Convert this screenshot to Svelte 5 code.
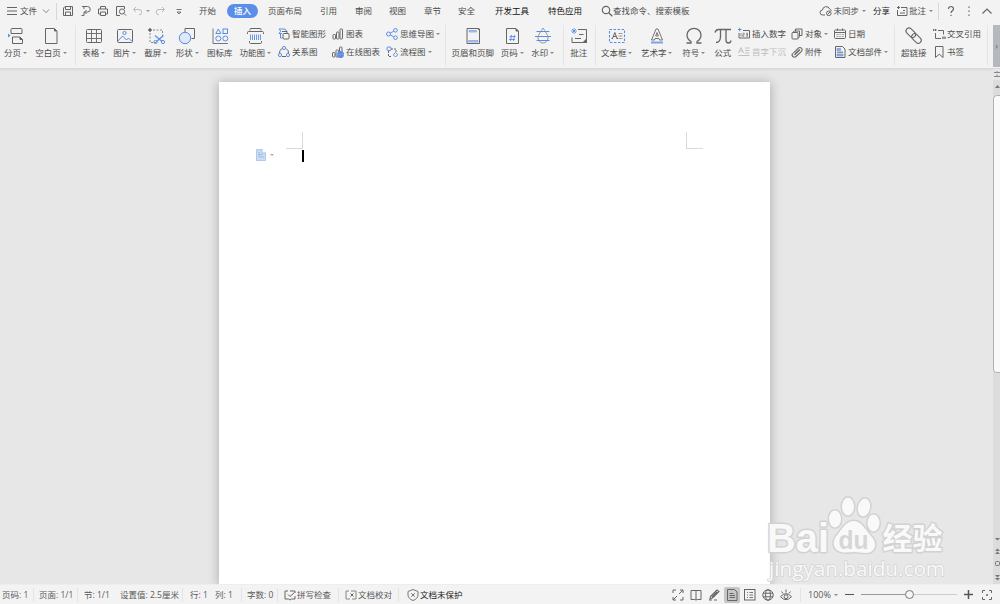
<script>
  // Cells are laid out in order; w is the width of each cell in pixels.
  const quick = [
    { icon: 'menu', w: 15 }, { text: '文件', w: 19 }, { icon: 'down', w: 14 }, { sep: true, w: 5 },
    { icon: 'save', w: 17 }, { icon: 'export', w: 17 }, { icon: 'print', w: 17 }, { icon: 'preview', w: 17 },
    { icon: 'undo', w: 14 }, { caret: true, w: 7, dim: true }, { icon: 'redo', w: 18 }, { icon: 'more', w: 20 }
  ];
  const tabs = [
    { text: '开始', w: 37 }, { text: '插入', w: 32, on: true }, { text: '页面布局', w: 52 }, { text: '引用', w: 35 },
    { text: '审阅', w: 34 }, { text: '视图', w: 35 }, { text: '章节', w: 34 }, { text: '安全', w: 37 },
    { text: '开发工具', w: 53, strong: true }, { text: '特色应用', w: 53, strong: true }
  ];
  const ribbon = [
    { w: 31, icon: 'break', text: '分页', caret: true },
    { w: 40, icon: 'blank', text: '空白页', caret: true },
    { sep: true, w: 8 },
    { w: 31, icon: 'table', text: '表格', caret: true },
    { w: 31, icon: 'picture', text: '图片', caret: true },
    { w: 31, icon: 'crop', text: '截屏', caret: true },
    { w: 32, icon: 'shapes', text: '形状', caret: true },
    { w: 33, icon: 'library', text: '图标库' },
    { w: 38, icon: 'barcode', text: '功能图', caret: true },
    { w: 54, shift: 2, rows: [{ icon: 'smart', text: '智能图形' }, { icon: 'relation', text: '关系图' }] },
    { w: 54, rows: [{ icon: 'chart', text: '图表' }, { icon: 'online', text: '在线图表' }] },
    { w: 56, rows: [{ icon: 'mind', text: '思维导图', caret: true }, { icon: 'flow', text: '流程图', caret: true }] },
    { sep: true, w: 8 },
    { w: 49, icon: 'header', text: '页眉和页脚' },
    { w: 30, icon: 'pagenum', text: '页码', caret: true },
    { w: 31, icon: 'water', text: '水印', caret: true },
    { sep: true, w: 9 },
    { w: 23, icon: 'note', text: '批注' },
    { sep: true, w: 8 },
    { w: 37, icon: 'textbox', text: '文本框', caret: true },
    { w: 43, icon: 'wordart', text: '艺术字', caret: true },
    { w: 31, icon: 'omega', text: '符号', caret: true },
    { w: 27, icon: 'pi', text: '公式' },
    { w: 53, rows: [{ icon: 'number', text: '插入数字' }, { icon: 'dropcap', text: '首字下沉', dim: true }] },
    { w: 43, rows: [{ icon: 'object', text: '对象', caret: true }, { icon: 'clip', text: '附件' }] },
    { w: 57, rows: [{ icon: 'date', text: '日期' }, { icon: 'parts', text: '文档部件', caret: true }] },
    { sep: true, w: 8 },
    { w: 33, icon: 'link', text: '超链接' },
    { w: 52, shift: 1, rows: [{ icon: 'cross', text: '交叉引用' }, { icon: 'bookmark', text: '书签' }] },
    { sep: true, w: 6 }
  ];
  const status = [
    { text: '页码: 1', w: 31 }, { sep: true, w: 6 }, { text: '页面: 1/1', w: 38 }, { sep: true, w: 7 },
    { text: '节: 1/1', w: 36 }, { text: '设置值: 2.5厘米', w: 62 }, { sep: true, w: 8 },
    { text: '行: 1', w: 25 }, { text: '列: 1', w: 26 }, { sep: true, w: 6 }, { text: '字数: 0', w: 30 }, { sep: true, w: 7 },
    { icon: 'spell', text: '拼写检查', w: 54 }, { sep: true, w: 7 }, { icon: 'proof', text: '文档校对', w: 53 },
    { sep: true, w: 9 }, { icon: 'shield', text: '文档未保护', w: 70, strong: true }
  ];
  const views = ['expand', 'book', 'pen', 'pageview', 'outline', 'globe', 'eye'];

  const B = 'stroke="#5b8de6"';
  const art = {
    menu: '<path d="M2 3.500h10M2 7h10M2 10.500h10"/>',
    down: '<path d="M4 5.500l3 3.200 3-3.200" stroke="#888"/>',
    save: '<path d="M2.500 4l1.500-1.500h7.500v9h-9zM4.500 2.500v3h5v-3M4.500 11.500v-3.500h5v3.500"/>',
    export: '<path d="M3 2.500h5.500a2.700 2.700 0 010 5.500H5.500M5 2.500v2.500M7.500 6L5.500 8l2 2M2.500 11.500h2.500V8"/>',
    print: '<path d="M4.500 5V2.500h5V5M4 10H2.500V5h9v5H10M4.500 8h5v3.500h-5z"/>',
    preview: '<path d="M6 11.500H2.500v-9h8V5"/><circle cx="8" cy="7.500" r="2.600"/><path d="M10 9.500l2 2"/>',
    undo: '<path d="M5 3L2.500 5.500 5 8M2.500 5.500h5.500a2.700 2.700 0 010 5.400" stroke="#bbb"/>',
    redo: '<path d="M9 3l2.500 2.500L9 8M11.500 5.500H6a2.700 2.700 0 000 5.400" stroke="#bbb"/>',
    more: '<path d="M4.500 5.500h5M5 8h4L7 10z" stroke-width=".9"/>',
    search: '<circle cx="6" cy="6" r="3.700" stroke-width="1.200"/><path d="M8.800 8.800l3.500 3.500" stroke-width="1.300"/>',
    cloud: '<path d="M6 11H3.700a2.500 2.500 0 01-.3-5A3.800 3.800 0 0110.700 5a2.500 2.500 0 011.600 2"/><circle cx="9.800" cy="9.300" r="2.300"/><path d="M8.500 10.500l2.500-2.500"/>',
    comment: '<path d="M6 3.500h6v8H2.500V6M2 3.500h3M3.500 2v3M5 9h5M8 6.500h2"/>',
    help: '<path d="M4.500 5a2.500 2.500 0 115 0c0 1.800-2.500 1.800-2.500 4M7 10.800v1.200" stroke-width="1.200"/>',
    dots: '<path d="M7 2.500v1.200M7 6.500v1.200M7 10.500v1.200" stroke-width="1.400"/>',
    up: '<path d="M2.500 9.500L7 5l4.500 4.500" stroke-width="1.200"/>',
    smart: `<path d="M2 2h6l2 2.500M2 2l1.800 2.200L2 6.500h3M3.500 7v4h2" ${B}/><rect x="6" y="6.500" width="6" height="5.500" rx="1"/><path d="M10 6.500v-2H5"/>`,
    relation: `<path d="M5 3.500a5 5 0 00-2.500 5M9 3.500a5 5 0 012.500 5M5 11.500h4"/><g ${B}><circle cx="7" cy="3" r="1.600"/><circle cx="3" cy="10" r="1.600"/><circle cx="11" cy="10" r="1.600"/></g>`,
    chart: '<rect x="2" y="7.500" width="2.500" height="4.500" rx=".7"/><rect x="5.500" y="5" width="2.500" height="7" rx=".7"/><rect x="9" y="2" width="2.500" height="10" rx=".7"/>',
    online: `<rect x="1.500" y="7.500" width="2.500" height="4.500" rx=".7"/><rect x="5" y="5" width="2.500" height="7" rx=".7"/><rect x="8.500" y="2" width="2.500" height="10" rx=".7"/><circle cx="9.500" cy="9.500" r="3.500" fill="#5b8de6" stroke="none"/><path d="M6 9.500h7" stroke="#8fb2f0" stroke-width=".5"/>`,
    mind: `<g ${B}><circle cx="3.500" cy="7" r="2"/><circle cx="10.500" cy="3.300" r="1.800"/><circle cx="10.500" cy="10.700" r="1.800"/></g><path d="M5.300 6l3.500-1.800M5.300 8l3.500 1.800" ${B}/>`,
    flow: `<rect x="2" y="2" width="4" height="3.500" rx="1" ${B}/><path d="M6 4h5v3M3.500 6v5.500H7" stroke-dasharray="2 1"/><path d="M10.500 7.500l2.300 2.200-2.300 2.300L8.200 9.700z" ${B}/>`,
    number: `<path d="M6 3.500h6.500v7.500H2V6"/><path d="M1 2.500h3.500M2.700 .8v3.500" ${B}/><path d="M4 6v3.500M5.700 6.200h1.500v1.500H5.700v1.600h1.500M9 6.200h1.500v3.100H9M9 7.700h1.500" stroke-width=".7"/>`,
    dropcap: '<g stroke="#b8b8b8"><path d="M1.500 8L4 2.500 6.500 8M2.500 6h3M8 3h4.500M8 5.500h4.500M8 8h4.500M1.500 10.500h11"/></g>',
    object: '<path d="M5.500 4.500V2h6.500v6.500H9.500"/><rect x="2" y="5.500" width="6" height="6.500" rx=".8"/><path d="M2.500 5.500L4.500 4h5v5.500L8 11.500"/>',
    clip: '<path d="M4.500 10L10 4.500M3.300 8.200l5-5a2.200 2.200 0 013.200 3.100L6 11.500a2.200 2.200 0 01-3.200-3.200M5 9l4-4" stroke-width="1.100"/>',
    date: '<rect x="1.500" y="3" width="11" height="8.500" rx="1"/><path d="M1.500 5.500h11M4.500 1.500v2M9.500 1.500v2"/><path d="M3.500 7.500h2M6.300 7.500h1.500M8.800 7.500h2M3.500 9.500h2M6.300 9.500h1.500M8.800 9.500h2" stroke-width=".8" stroke="#888"/>',
    parts: '<path d="M2.500 1.500h7l2.500 2.500v8.500h-9.500z"/><path d="M4 3.500h3.500v2H4zM4 9h6v2H4z" fill="#8fb2f0" stroke="#5b8de6" stroke-width=".6"/><path d="M4 7.200h6"/>',
    cross: '<path d="M6 3.500h5.500v4M9 11.500H3.500V6"/><path d="M1.700 2v2M3.700 2v2M11 9.500v2.500M13 9.500v2.500" stroke-width="1.300"/>',
    bookmark: '<path d="M3.500 1.500h7.500v11L7.200 9.200 3.500 12.500z"/>',
    spell: '<path d="M5 3H2v8h3.500l1.500 1 1.500-1H12V8M7 3h5v2M5 6.500l2 2 4.500-4"/>',
    proof: '<path d="M5 3H2v8h4M7 3h5v8H8" stroke="#888"/><path d="M6.500 5.500l3 3M9.500 5.500l-3 3"/>',
    shield: '<path d="M7 1.500l5 2v3.500c0 2.500-2 4.500-5 5.500-3-1-5-3-5-5.500V3.500z" stroke="#777"/><path d="M5.200 5.200l3.600 3.600M8.800 5.200L5.200 8.800" stroke="#777"/>',
    expand: '<path d="M2 5V2h3M9 2h3v3M12 9v3H9M5 12H2V9M8 6l4-4M6 8l-4 4"/>',
    book: '<path d="M7 2.500H2v9h3.500L7 12l1.500-.5H12v-9H7v9.500"/>',
    pen: '<path d="M3.500 8.500L10 2l2 1.500L5.500 10l-2.500.7zM7 12h3M2 12h3M10 4L5 9" stroke-width="1.100"/>',
    pageview: '<path d="M2.500 1.500h7l2.500 2.500v8.500H2.500zM4.500 5.500h4M4.500 7.500h5.500M4.500 9.500h5.500"/>',
    outline: '<rect x="1.500" y="1.500" width="10.500" height="10.500"/><path d="M4 4.500h1M6.500 4.500H10M4 7h1M6.500 7H10M4 9.500h1M6.500 9.500H10" stroke-width=".9"/>',
    globe: '<circle cx="7" cy="7" r="5.200"/><ellipse cx="7" cy="7" rx="2.400" ry="5.200"/><path d="M2 5.200h10M2 8.800h10"/>',
    eye: '<path d="M1.500 8.700q5.500-6 11 0-5.500 6-11 0zM2.500 3.500l1.500 2M7 1.500v3M11.500 3.500l-1.500 2"/><circle cx="7" cy="8.700" r="1.900"/>',
    fit: '<path d="M2.500 5V2.500H5M9 2.500h2.500V5M11.500 9v2.500H9M5 11.500H2.500V9M6 7h2M7 6v2"/>',
    // 20 by 20 artwork for the large buttons
    break: `<path d="M5 7.500V3.500a1 1 0 011-1h9a1 1 0 011 1v4zM16.500 17.500v-4l-2.500-2.500H6.500v6.500z"/><path d="M14 11v2.500h2.500z" fill="#333"/><path d="M2 7.500l2.500 2-2.500 2z" fill="#5b8de6" stroke="none"/>`,
    blank: '<path d="M4.500 2.500h9L16 5v12.500H4.500z"/><path d="M13.500 3v2h2z" fill="#333"/>',
    table: '<rect x="2.500" y="3.500" width="15" height="13" rx="1"/><path d="M2.500 7.500h15M2.500 12.500h15M7.500 3.500v13M12.500 3.500v13" stroke-width=".9"/>',
    picture: `<rect x="2.500" y="3.500" width="15" height="13" rx="1"/><path d="M3 15l4.500-5 4 4 2-2 3.500 3.500" ${B}/><circle cx="9.500" cy="7" r="1.600" ${B}/>`,
    crop: `<path d="M2 4h4M4 2v4" stroke="#333"/><path d="M7 4h9.500v6M4 7v9.500h6" stroke-dasharray="2 1.500" stroke="#888"/><g ${B}><path d="M9 9.500l7 6M17.500 9.500l-7 6" stroke-width="1.200"/><circle cx="9.500" cy="16" r="1.600"/><circle cx="17" cy="16" r="1.600"/></g>`,
    shapes: `<path d="M8 7V2.500h9.500v10h-3"/><circle cx="8" cy="12" r="5.700" fill="#dfe8f5" ${B}/>`,
    library: `<path d="M3 2.500v15h15" stroke="#777"/><g ${B}><path d="M8.300 3L5.800 7.500h5z"/><rect x="13" y="3" width="4.500" height="4.500"/><circle cx="8.300" cy="12.500" r="2.500"/><circle cx="15.300" cy="12.500" r="2.500"/></g>`,
    barcode: `<path d="M5 4.500V3.500a1 1 0 011-1h9a1 1 0 011 1v1M2.500 8V6.500a1 1 0 011-1h14a1 1 0 011 1V8M4.500 15v1.500a1 1 0 001 1h10a1 1 0 001-1V15"/><path d="M5.500 8.500v5.500M7.500 8.500v5.500M9.500 8.500v5.500M11.500 8.500v5.500M13.500 8.500v5.500M15.500 8.500v5.500" ${B} stroke-width=".9"/>`,
    header: '<path d="M4 2.500h10.500L16.500 4.500v13H4z"/><path d="M6 4.500h7.500v1.500H6zM5.500 14.500h9.500v1.500H5.500z" fill="#a9c4f2" stroke="#7ba3ea" stroke-width=".7"/><path d="M14.500 2.500l2 2V3z" fill="#333"/>',
    pagenum: `<path d="M4.500 2.500h9.500L16.500 5v12.500h-12z"/><path d="M14 3v2h2z" fill="#333"/><path d="M9.500 9l-1 6M12.500 9l-1 6M7.500 10.500h6M7 13.500h6" ${B} stroke-width=".9"/>`,
    water: `<path d="M10 2C8 5.500 5 8.500 5 12a5 5 0 0010 0c0-3.500-3-6.500-5-10z" stroke="#999"/><path d="M3.500 5.500h13M2 10.500h16M3.500 14.500h13" ${B}/>`,
    note: `<path d="M9 3.500h8.500v13H3v-5M10 8.500h4.500M6 12.500h6"/><path d="M17.500 13v3.500H14z" fill="#555"/><path d="M5 2v6M2 5h6M3 3l4 4M7 3L3 7" ${B} stroke-width=".8"/>`,
    textbox: `<rect x="2.500" y="3.500" width="15" height="13" ${B} stroke-dasharray="2.500 1.500" stroke-width="1.100"/><path d="M5.500 12.500l2.300-6 2.300 6M6.200 10.500h3M4.500 12.500h1.500M9.500 12.500h1.500"/><path d="M11.500 7.500h4M11.500 10h4M11.500 12.500h4" stroke="#999"/>`,
    wordart: `<path d="M9 3h2l4.500 11h-3L12 12.500H8L7.500 14H4.500zM8.700 10L10 6.500 11.300 10z" stroke-width=".9"/><path d="M4 16.500h12" stroke="#7ba3ea" stroke-width="2"/>`,
    omega: '<path d="M2.500 17h4.500v-1.500C4.500 14 3 12 3 9a7 6.700 0 0114 0c0 3-1.500 5-4 6.500V17h4.500" stroke-width="1.300"/>',
    pi: '<path d="M2 6.500Q3 3.500 5.500 3.500H18M7.500 3.500v7q0 6-4.500 6M13 3.500V14q0 3 2.500 3 2 0 2.500-2.500" stroke-width="1.300"/>',
    link: '<g transform="rotate(45 10 10)" stroke-width="1.100"><rect x="0" y="7" width="11" height="6" rx="3"/><rect x="8" y="7" width="11" height="6" rx="3"/></g>'
  };
</script>

{#snippet pic(name, size = 14)}
  <svg class="pic" width={size} height={size} viewBox="0 0 {size} {size}">{@html art[name]}</svg>
{/snippet}

<div class="app">
  <header class="top">
    <div class="quick">
      {#each quick as q}
        <span class="cell" class:dim={q.dim} style:width="{q.w}px">
          {#if q.icon}{@render pic(q.icon)}{:else if q.sep}<i class="sep tall"></i>{:else if q.caret}<i class="caret"></i>{:else}{q.text}{/if}
        </span>
      {/each}
    </div>
    <nav class="tabs">
      {#each tabs as t}
        <span class="cell" class:strong={t.strong} style:width="{t.w}px"><span class:pill={t.on}>{t.text}</span></span>
      {/each}
    </nav>
    <div class="search">{@render pic('search')}<span>查找命令、搜索模板</span></div>
    <div class="account">
      {@render pic('cloud')}<span class="sync">未同步</span><i class="caret"></i>
      <span class="share">分享</span>
      {@render pic('comment')}<span class="remark">批注</span><i class="caret"></i>
      <i class="sep tall"></i>
      <span class="ends">{@render pic('help')}{@render pic('dots')}{@render pic('up')}</span>
    </div>
  </header>

  <section class="ribbon">
    {#each ribbon as r}
      {#if r.sep}
        <div class="divider" style:width="{r.w}px"><i class="sep"></i></div>
      {:else if r.rows}
        <div class="stack" style:width="{r.w}px" style:margin-left="{r.shift ?? 0}px">
          {#each r.rows as s}
            <div class="small" class:dim={s.dim}>{@render pic(s.icon)}<span>{s.text}</span>{#if s.caret}<i class="caret"></i>{/if}</div>
          {/each}
        </div>
      {:else}
        <div class="big" style:width="{r.w}px">
          {@render pic(r.icon, 20)}
          <div class="label">{r.text}{#if r.caret}<i class="caret"></i>{/if}</div>
        </div>
      {/if}
    {/each}
    <div class="scroller">›</div>
  </section>

  <main class="work">
    <article class="page">
      <div class="marks"><i class="mark left"></i><i class="mark right"></i></div>
      <div class="line">
        <svg width="10" height="12" viewBox="0 0 10 12"><path d="M.5.5h5.500l3.500 3.500v7.500h-9z" fill="#cbdcf4" stroke="#b4caeb"/><path d="M3 3v5h5M3 5.500h3.500" stroke="#9dbbe6" fill="none"/><path d="M6 0v4h4" fill="#fff" stroke="#a9c2e8"/></svg>
        <i class="caret"></i><b class="cursor"></b>
      </div>
    </article>
    <aside class="bar">
      <svg class="head" width="7" height="25" viewBox="0 0 7 25"><path d="M0 0h7v11H0z" fill="#e7e7e7"/><path d="M1 3.500h6M1 7.500h6M4 2v2M4 7V5.500" stroke="#888" fill="none"/><path d="M2 19h5l-2.500-3z" fill="#777"/></svg>
      <div class="thumb"></div>
      <svg class="foot" width="7" height="50" viewBox="0 0 7 50"><g fill="#777"><path d="M2 4h5L4.500 6.500zM2 17h5l-2.500-2.500zM2 20h5l-2.500-2.500zM2 41h5l-2.500 2.500zM2 44h5l-2.500 2.500z"/></g><rect x="2.500" y="27.500" width="4" height="4" rx="1" fill="none" stroke="#777"/></svg>
    </aside>
    <svg class="brand" width="190" height="94" viewBox="0 0 190 94">
      <g fill="#f9f9f9" stroke="#d2d2d2" stroke-width="3" paint-order="stroke" stroke-linejoin="round">
        <text x="2" y="60" class="latin" textLength="62" lengthAdjust="spacingAndGlyphs">Bai</text>
        <ellipse cx="70" cy="27" rx="6" ry="8.500" /><ellipse cx="83" cy="14.500" rx="6" ry="9" /><ellipse cx="99" cy="15.500" rx="6" ry="9" transform="rotate(12 99 15.500)" /><ellipse cx="108.500" cy="31" rx="6" ry="8.500" />
        <path d="M89 29c-8 0-12 8-16 13-5 5-6 12-1 16 5 4 11 2 17 2s12 2 17 0c6-4 5-11 0-16-5-5-9-15-17-15z" />
        <text x="117.500" y="57" class="cjk" textLength="60" lengthAdjust="spacingAndGlyphs">经验</text>
        <text x="4" y="84" class="site" textLength="176" lengthAdjust="spacingAndGlyphs">jingyan.baidu.com</text>
      </g>
      <text x="73.500" y="56.500" class="du" textLength="30" lengthAdjust="spacingAndGlyphs">du</text>
    </svg>
  </main>

  <footer class="status">
    {#each status as s}
      <span class="cell" class:strong={s.strong} style:width="{s.w}px">
        {#if s.sep}<i class="sep"></i>{/if}{#if s.icon}{@render pic(s.icon)}{/if}{s.text ?? ''}
      </span>
    {/each}
    <div class="views">
      {#each views as v}<span class="view" class:active={v === 'pageview'}>{@render pic(v)}</span>{/each}
    </div>
    <i class="sep"></i>
    <span class="zoom">100%</span><i class="caret"></i>
    <i class="minus"></i>
    <div class="track"><i class="knob"></i></div>
    <svg class="plus" width="9" height="9" viewBox="0 0 9 9"><path d="M0 4.500h9M4.500 0v9" stroke="#555" stroke-width="1.500" /></svg>
    {@render pic('fit')}
  </footer>
</div>

<style>
  :global(body) { margin: 0; overflow: hidden; }
  .app { width: 1000px; height: 604px; display: flex; flex-direction: column; overflow: hidden; background: #e7e7e7; color: #4c4c4c; font: 8.5px/12px "Open Sans", "Noto Sans CJK SC", sans-serif; white-space: nowrap; }
  .app :global(.pic) { flex: none; display: block; fill: none; stroke: #666; stroke-width: 1; }
  .cell { display: flex; align-items: center; flex: none; }
  .strong { color: #111; }
  .caret { flex: none; width: 0; height: 0; border: 2px solid transparent; border-top: 2.5px solid #888; border-bottom: 0; }
  .dim { color: #b5b5b5; opacity: .85; }
  .sep { display: block; width: 1px; height: 14px; background: #e4e4e4; flex: none; }
  .tall { height: 17px; background: #d8d8d8; }

  .top { height: 23px; display: flex; align-items: center; background: #f3f3f3; flex: none; padding-bottom: 1px; box-sizing: border-box; }
  .quick { display: flex; align-items: center; padding-left: 5px; width: 194px; box-sizing: border-box; }
  .quick .cell:nth-child(n+5) { margin-left: .5px; }
  .quick .cell:nth-child(4) { margin-left: 2.500px; }
  .tabs { display: flex; padding-left: 5px; }
  .tabs .cell { height: 22px; }
  .pill { background: #5a8ee8; color: #fff; border-radius: 7px; padding: 1px 7px; margin-left: -9px; height: 12px; font-weight: 500; }
  .search { display: flex; align-items: center; margin-left: -1px; width: 90px; }
  .search span { margin-left: -1px; }
  .account { display: flex; align-items: center; margin-left: auto; padding-right: 6px; }
  .sync, .remark { margin: 0 3px 0 0; }
  .share { margin: 0 5px 0 7px; color: #222; }
  .account .sep { margin-left: 5px; }
  .ends { display: flex; gap: 4px; margin-left: 5px; }

  .ribbon { height: 46px; display: flex; background: #f3f3f3; border-bottom: 1px solid #d9d9d9; box-sizing: border-box; flex: none; box-shadow: 0 1px 2px #d8d8d8; position: relative; }
  .big { display: flex; flex-direction: column; align-items: center; padding-top: 3px; flex: none; margin-left: -.8px; margin-right: .8px; }
  .label { display: flex; align-items: center; margin-top: 1px; }
  .label .caret, .small .caret { margin-left: 2px; }
  .stack { display: flex; flex-direction: column; gap: 4px; padding-top: 4px; flex: none; }
  .small { display: flex; align-items: center; height: 14px; }
  .small span { margin-left: 1px; }
  .divider { display: flex; justify-content: center; flex: none; padding-top: 2px; box-sizing: border-box; }
  .divider .sep { height: 41px; }
  .big:first-child, .big:nth-child(2) { margin-left: 0; margin-right: 0; }
  .scroller { margin: 2px 0 0 auto; width: 7px; height: 42px; background: #b5b8bd; color: #666; line-height: 42px; text-align: center; font-size: 9px; }

  .work { flex: 1; display: flex; min-height: 0; position: relative; overflow: hidden; }
  .page { margin: 13px 0 0 219px; width: 551px; background: #fff; box-shadow: 0 1px 10px 1px #b2b2b2; flex: none; box-sizing: border-box; padding-top: 50px; }
  .marks { display: flex; justify-content: space-between; padding: 0 67px; }
  .mark { width: 17px; height: 17px; box-sizing: border-box; border-bottom: 1px solid #dadada; }
  .left { border-right: 1px solid #dadada; }
  .right { border-left: 1px solid #dadada; }
  .line { display: flex; align-items: center; padding-left: 37px; height: 13px; }
  .line svg, .line .caret { margin-top: -1px; }
  .line .caret { margin-left: 4px; border-top-color: #aaa; }
  .cursor { width: 1.500px; height: 12px; background: #000; margin: 1px 0 0 28px; }
  .bar { margin-left: auto; width: 7px; background: #dcdcdc; display: flex; flex-direction: column; }
  .head, .foot { flex: none; }
  .thumb { height: 278px; width: 14px; box-sizing: border-box; background: #fafafa; border: 1px solid #b2b2b2; border-radius: 4px; flex: none; margin-top: 1px; }
  .foot { margin-top: auto; }
  .brand { position: absolute; left: 765px; top: 423px; }
  .latin { font: bold 40px "Liberation Sans", sans-serif; }
  .cjk { font: bold 30px "Noto Sans CJK SC", sans-serif; }
  .site { font: 20px "Open Sans", sans-serif; stroke-width: 1.500; }
  .du { font: bold 25px "Liberation Sans", sans-serif; fill: #d6d6d6; }

  .status { height: 20px; flex: none; display: flex; align-items: center; background: #f3f3f3; border-top: 1px solid #ededed; box-sizing: border-box; padding-left: 2px; color: #5a5a5a; position: relative; }
  .status .strong { color: #222; }
  .status .cell { height: 18px; }
  .status .cell :global(.pic) { margin: 0 0 0 -1px; }
  .views { display: flex; margin-left: auto; }
  .view { width: 16px; height: 16px; display: grid; place-items: center; margin-right: 2px; }
  .active { background: #c6c6c6; border-radius: 2px; }
  .status > .sep { margin-left: 4px; }
  .zoom { margin-left: 7px; font-size: 9px; width: 23px; }
  .status > .caret { margin-left: 3px; }
  .minus { width: 9px; height: 1.500px; background: #555; margin: 0 7px 0 7px; }
  .track { width: 96px; height: 1px; background: linear-gradient(90deg, #999 50%, #ccc 50%); display: flex; align-items: center; justify-content: center; }
  .knob { width: 9px; height: 9px; box-sizing: border-box; border: 1.200px solid #777; border-radius: 50%; background: #f6f6f6; flex: none; }
  .status > :global(.pic) { margin: 0 6px 0 0; }
  .status > .plus { margin: 0 7px; }
</style>
